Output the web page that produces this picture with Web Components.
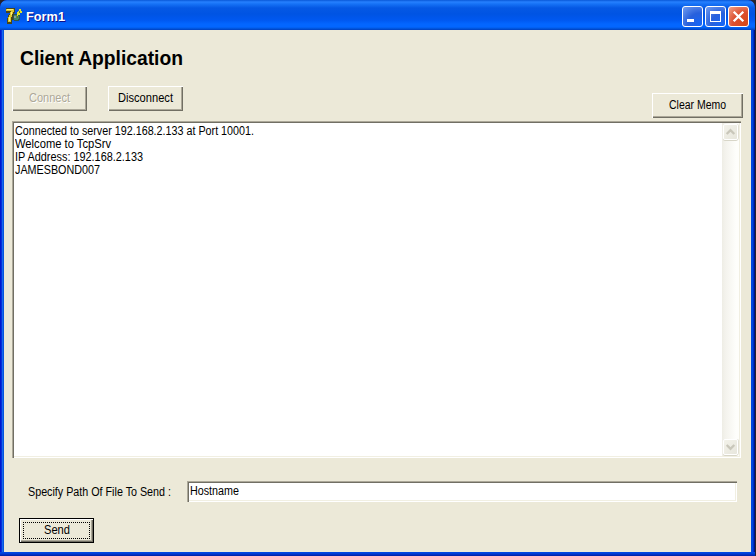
<!DOCTYPE html>
<html lang="en"><head><meta charset="utf-8"><title>Form1</title>
<style>
html,body{margin:0;width:756px;height:556px;overflow:hidden;background:#25242c}
body{font:12px/13px "Liberation Sans",Arial,sans-serif;color:#000}
</style></head><body>
<app-window></app-window>
<script>
const define=(name,html,init)=>customElements.define(name,class extends HTMLElement{
  connectedCallback(){
    if(this.shadowRoot)return;
    const t=document.createElement('template');t.innerHTML=html;
    this.attachShadow({mode:'open'}).append(t.content.cloneNode(true));
    if(init)init(this,this.shadowRoot);
  }
});
// A single line of text condensed to the given width.
define('ui-text',`<style>:host{display:block;white-space:pre;flex:none}span{display:inline-block;transform-origin:0 0}</style><span><slot></slot></span>`,(h,r)=>{
  const s=r.querySelector('span'),w=+h.getAttribute('w');
  const natural=s.getBoundingClientRect().width;
  h.style.width=w+'px';
  s.style.transform='scaleX('+w/natural+')';
});
define('ui-button',`<style>
:host{display:flex;align-items:center;justify-content:center;box-sizing:border-box;width:75px;height:25px;flex:none;background:#ece9d8;padding-bottom:1px;
box-shadow:inset 1px 1px #fff,inset -1px -1px #716f64,inset -2px -2px #aca899}
:host([disabled]){color:#aca899;text-shadow:1px 1px #fff}
:host([focused]){position:relative;border:1px solid #000}
i{display:none}
:host([focused]) i{display:block;position:absolute;inset:3px;border:1px dotted #000}
</style><slot></slot><i></i>`);
define('caption-button',`<style>
:host{display:block;width:21px;height:21px;flex:none}svg{display:block}
</style><svg width="21" height="21"><defs>
<radialGradient id="b" cx=".85" cy=".9" r="1.15"><stop offset="0" stop-color="#1666f6"/><stop offset=".5" stop-color="#2860dc"/><stop offset="1" stop-color="#6c98ee"/></radialGradient>
<radialGradient id="r" cx=".85" cy=".9" r="1.15"><stop offset="0" stop-color="#d84818"/><stop offset=".55" stop-color="#dc5030"/><stop offset="1" stop-color="#f09a80"/></radialGradient></defs>
<rect x=".5" y=".5" width="20" height="20" rx="2.5" fill="url(#b)" stroke="#fff"/><g></g></svg>`,(h,r)=>{
  const k=h.getAttribute('kind');
  if(k==='close')r.querySelector('rect').setAttribute('fill','url(#r)');
  r.querySelector('g').innerHTML={
    min:'<path d="M5 13h7v3H5z" fill="#fff"/>',
    max:'<path d="M5 5h11v11H5zM6 8v7h9V8z" fill="#fff" fill-rule="evenodd"/>',
    close:'<path d="M5.7 5.7l9.6 9.6M15.3 5.7l-9.6 9.6" stroke="#fff" stroke-width="2.3"/>'}[k];
});
define('app-icon',`<style>:host{display:block;width:16px;height:16px;flex:none}svg{display:block}</style>
<svg width="16" height="16" shape-rendering="crispEdges">
<path d="M0 0h9v4L7 8v3l-1 3v2H1v-4l1-4 2-3H0z" fill="#4a4618"/>
<path d="M0 1h8v2L7 5 6 8l-1 3v3H2v-3l1-3 1-2 1-3H0z" fill="#dcc62c"/>
<path d="M1 1h6v1H1zM5 4h1v3H5zM3 9h1v4H3z" fill="#fff07a"/>
<path d="M8 6h4l2 2v3l-2 2H8l-1-2V7z" fill="#2c5550"/>
<path d="M8 7h4v1h1v3h-1v1H8z" fill="#448c62"/>
<path d="M8 8h2v2H8z" fill="#8a9c98"/>
<path d="M13 1h2v2h1v2h-2v2h-2v2h-1V6l1-3h1z" fill="#dfe42a"/>
<path d="M13 3h1v2h-1zM11 8h1v2h-1z" fill="#667c18"/></svg>`);
define('title-bar',`<style>
:host{display:flex;box-sizing:border-box;height:30px;flex:none;align-items:flex-start;padding:6px 6px 0 6px;border-radius:7px 7px 0 0;
background:linear-gradient(#0958d8 0,#2680ff 2px,#1672f6 4px,#0558e4 8px,#0054e3 14px,#0058f0 20px,#0366ff 24px,#0366ff 27px,#0050d4 29px,#003dbe 30px)}
app-icon{margin-top:2px}
ui-text{font:bold 13px/16px "Liberation Sans",sans-serif;color:#fff;text-shadow:1px 1px #0f1089;margin:3px 0 0 4px}
div{display:flex;gap:2px;margin-left:auto}
</style><app-icon></app-icon><ui-text w="39">Form1</ui-text><div><caption-button kind="min"></caption-button><caption-button kind="max"></caption-button><caption-button kind="close"></caption-button></div>`);
define('scroll-arrow',`<style>
:host{display:block;box-sizing:border-box;width:15px;height:16px;border:1px solid #fff;border-radius:2px;background:linear-gradient(135deg,#f3f2ea,#e7e6dc);box-shadow:0 1px #d8d6c8,1px 0 #e2e0d4;margin-left:1px}
svg{display:block}:host([down]) svg{transform:scaleY(-1)}
</style><svg width="13" height="14"><path d="M2.7 9L6.5 5.2 10.3 9" fill="none" stroke="#c9c7ba" stroke-width="2.3"/></svg>`);
define('memo-box',`<style>
:host{display:flex;box-sizing:border-box;width:729px;height:337px;background:#fff;padding:2px;
box-shadow:inset 1px 1px #aca899,inset 2px 2px #716f64,inset -1px -1px #fff,inset -2px -2px #f1efe2}
.t{flex:1;padding:2px 0 0 1px}
.s{width:17px;display:flex;flex-direction:column;justify-content:space-between;box-sizing:border-box;padding:1px 0;background:linear-gradient(90deg,#eeede5 0,#f3f2ec 3px,#fefefb 14px)}
</style><div class="t"><slot></slot></div><div class="s"><scroll-arrow></scroll-arrow><scroll-arrow down></scroll-arrow></div>`);
define('text-field',`<style>
:host{display:block;box-sizing:border-box;width:550px;height:21px;background:#fff;padding:4px 3px;
box-shadow:inset 1px 1px #aca899,inset 2px 2px #716f64,inset -1px -1px #fff,inset -2px -2px #f1efe2}
</style><slot></slot>`);
define('client-form',`<style>
:host{display:block;flex:1;box-sizing:border-box;background:#ece9d8;padding:17px 8px 0}
.h{font:bold 20px/22px "Liberation Sans",sans-serif;margin-left:8px}
.b{display:flex;gap:21px;height:35px;margin-top:17px}
.c{margin:7px 0 0 auto;width:91px}
.f{display:flex;margin:23px 0 16px 16px;height:21px}
.f>ui-text{margin-top:5px}
text-field{margin-left:16px}
.s{margin-left:7px}
</style>
<ui-text class="h" w="163">Client Application</ui-text>
<div class="b"><ui-button disabled><ui-text w="41">Connect</ui-text></ui-button><ui-button><ui-text w="55">Disconnect</ui-text></ui-button><ui-button class="c"><ui-text w="57">Clear Memo</ui-text></ui-button></div>
<memo-box><ui-text w="239">Connected to server 192.168.2.133 at Port 10001.</ui-text><ui-text w="96">Welcome to TcpSrv</ui-text><ui-text w="128">IP Address: 192.168.2.133</ui-text><ui-text w="85">JAMESBOND007</ui-text></memo-box>
<div class="f"><ui-text w="143">Specify Path Of File To Send :</ui-text><text-field><ui-text w="49">Hostname</ui-text></text-field></div>
<ui-button class="s" focused><ui-text w="26">Send</ui-text></ui-button>`);
define('app-window',`<style>
:host{display:flex;flex-direction:column;width:755px;height:556px;border-radius:7px 7px 0 0;overflow:hidden;background:#0831d9}
.m{display:flex;flex:1;box-sizing:border-box;padding:0 4px 4px;
background:linear-gradient(#0046e0,#0046e0 1px,#0036d0 2px,#001ea0 4px) bottom/100% 4px no-repeat,linear-gradient(90deg,#0019cf 0 1px,#0831d9 1px 2px,#166aee 2px 3px,#0855dd 3px 4px,transparent 4px calc(100% - 4px),#0046e0 calc(100% - 4px) calc(100% - 2px),#0030c0 calc(100% - 2px) calc(100% - 1px),#00138c calc(100% - 1px))}
</style><title-bar></title-bar><div class="m"><client-form></client-form></div>`);
</script></body></html>
